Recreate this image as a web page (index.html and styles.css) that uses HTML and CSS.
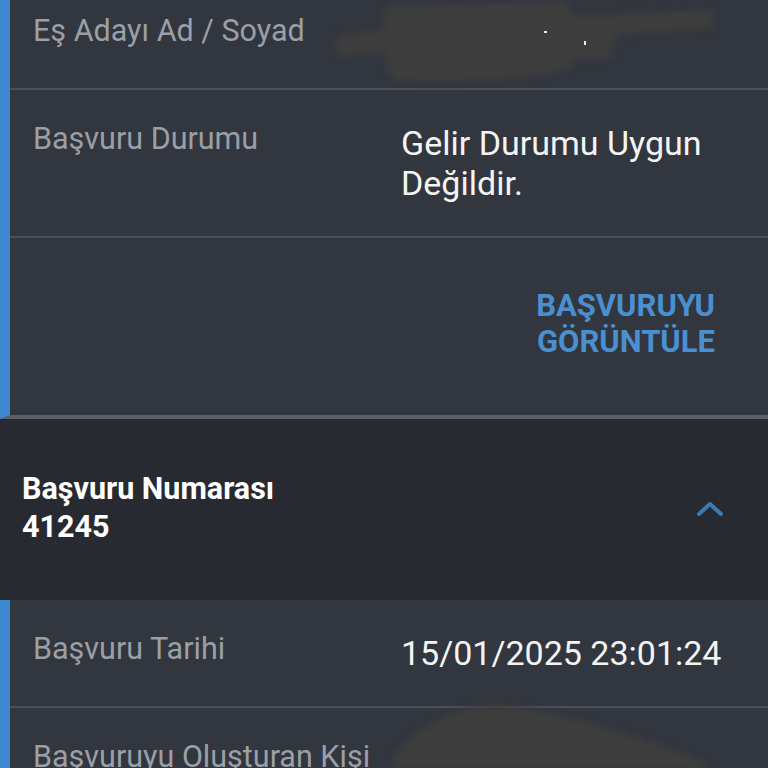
FILE: index.html
```html
<!DOCTYPE html>
<html lang="tr">
<head>
    <meta charset="UTF-8">
    <meta name="viewport" content="width=device-width, initial-scale=1.0">
    <title>Başvurularım</title>
    <link rel="stylesheet" href="styles.css">
</head>
<body>
    <div class="card first">
        <div class="row">
            <div class="label">Eş Adayı Ad / Soyad</div>
            <div class="value redacted">&nbsp;</div>
        </div>
        <div class="row">
            <div class="label">Başvuru Durumu</div>
            <div class="value">Gelir Durumu Uygun Değildir.</div>
        </div>
        <div class="actions">
            <a class="link-btn" href="#">BAŞVURUYU<br>GÖRÜNTÜLE</a>
        </div>
    </div>

    <div class="accordion-header">
        <div class="header-text">
            <div>Başvuru Numarası</div>
            <div>41245</div>
        </div>
        <svg class="chevron" width="30" height="20" viewBox="0 0 30 20">
            <path d="M4 16 L15 6 L26 16" fill="none" stroke="#3d7ab5" stroke-width="4" stroke-linecap="round" stroke-linejoin="round"/>
        </svg>
    </div>

    <div class="card">
        <div class="row">
            <div class="label">Başvuru Tarihi</div>
            <div class="value">15/01/2025 23:01:24</div>
        </div>
        <div class="row">
            <div class="label">Başvuruyu Oluşturan Kişi</div>
            <div class="value redacted">&nbsp;</div>
        </div>
    </div>

    <!-- blurred redaction marks over personal data -->
    <svg class="redaction" width="768" height="768" viewBox="0 0 768 768">
        <defs>
            <filter id="soft" x="-10%" y="-30%" width="120%" height="160%">
                <feGaussianBlur stdDeviation="3"/>
            </filter>
        </defs>
        <g fill="#3c3c3e" filter="url(#soft)">
            <path d="M336 36 C420 26 560 16 712 10 L714 28 C600 36 470 46 338 56 Z"/>
            <path d="M386 6 L565 2 C580 20 582 55 568 70 C520 80 460 84 392 80 C382 60 382 30 386 6 Z"/>
            <path d="M470 30 L620 22 L610 58 L480 64 Z"/>
            <path d="M392 768 C395 740 430 725 455 712 C475 704 520 704 545 712 C610 728 680 748 712 768 Z"/>
        </g>
        <rect x="544" y="31" width="3" height="2" fill="#e8e8e8"/>
        <rect x="584" y="41" width="2" height="4" fill="#e8e8e8"/>
    </svg>
</body>
</html>
```

FILE: styles.css
```css
body {
    font-family: Roboto, "Noto Sans", sans-serif;
    background-color: #32363e;
    margin: 0;
    overflow: hidden;
    position: relative;
    height: 768px;
}
.card {
    border-left: 10px solid #3d88d0;
    background-color: #32363e;
}
.card.first {
    margin-top: -18px;
    border-bottom: 4px solid #5b5f66;
}
.row {
    display: grid;
    grid-template-columns: 368px 1fr;
    padding: 33px 20px 33px 23px;
    border-bottom: 2px solid #4b4f57;
}
.label {
    color: #9b9fa6;
    font-size: 30.5px;
    line-height: 32px;
}
.value {
    color: #f4f4f4;
    font-size: 34px;
    line-height: 40px;
}
.actions {
    display: flex;
    justify-content: flex-end;
    padding: 50px 53px 55px 0;
}
.link-btn {
    color: #4a8fd0;
    font-weight: bold;
    font-size: 31px;
    line-height: 36px;
    text-decoration: none;
    text-align: right;
}
.accordion-header {
    background-color: #272a30;
    display: flex;
    align-items: center;
    justify-content: space-between;
    padding: 51px 43px 54px 22px;
}
.header-text {
    color: #ffffff;
    font-weight: bold;
    font-size: 30.5px;
    line-height: 38px;
}
.redaction {
    position: absolute;
    top: 0;
    left: 0;
    pointer-events: none;
}
```
